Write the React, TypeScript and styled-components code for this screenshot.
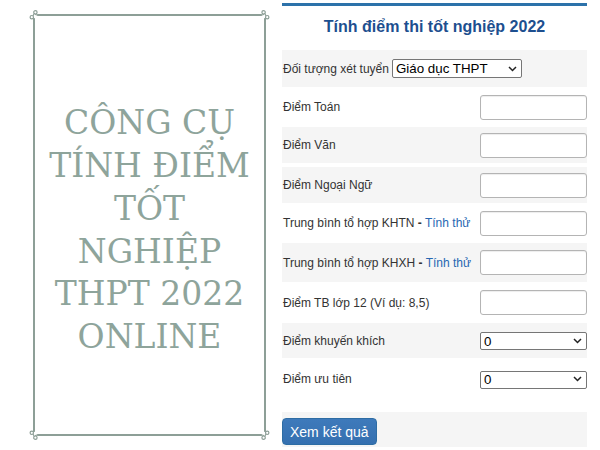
import styled, { createGlobalStyle, css } from "styled-components";

const Global = createGlobalStyle`
  body { margin: 0; background: #fff; }
  * { box-sizing: border-box; }
`;

const ink = "#8d9f97";
const sans = `"Liberation Sans", Arial, sans-serif`;

const Page = styled.div`
  display: flex;
  width: 600px;
  height: 450px;
  background: #fff;
  font-family: ${sans};
`;

const Poster = styled.div`
  flex: none;
  width: 282px;
  padding: 14px 0 0 33px;
`;

const Frame = styled.div`
  position: relative;
  width: 233px;
  height: 422px;
  border: 2px solid ${ink};
  display: flex;
  align-items: center;
  justify-content: center;
  padding-top: 11px;
`;

type Corner = "tl" | "tr" | "bl" | "br";

const Ornament = styled.svg<{ $at: Corner }>`
  position: absolute;
  width: 12px;
  height: 12px;
  ${({ $at }) => ($at[0] === "t" ? "top: -7px;" : "bottom: -7px;")}
  ${({ $at }) => ($at[1] === "l" ? "left: -7px;" : "right: -7px;")}
  transform: scale(${({ $at }) => ($at[1] === "r" ? -1 : 1)}, ${({ $at }) => ($at[0] === "b" ? -1 : 1)});
`;

const Headline = styled.div`
  font-family: "DejaVu Serif", "Liberation Serif", serif;
  font-size: 33px;
  line-height: 42.8px;
  color: #8ea49b;
  text-align: center;
`;

const Form = styled.div`
  width: 305px;
  padding-top: 3px;
`;

const Panel = styled.div`
  border-top: 3px solid #2c72aa;
`;

const Heading = styled.div`
  height: 44px;
  padding-bottom: 2px;
  display: flex;
  align-items: center;
  justify-content: center;
  font-size: 16px;
  font-weight: 700;
  color: #1d4f8f;
`;

const Row = styled.div<{ $h: number; $shade?: boolean; $gap?: number; $inline?: boolean }>`
  display: flex;
  align-items: center;
  height: ${({ $h }) => $h}px;
  margin-top: ${({ $gap }) => $gap ?? 0}px;
  padding-left: 1px;
  background: ${({ $shade }) => ($shade ? "#f5f5f5" : "#fff")};
  ${({ $inline }) =>
    $inline
      ? css`gap: 3px;`
      : css`justify-content: space-between;`}
`;

const ButtonRow = styled(Row)`
  align-items: flex-start;
  padding: 6px 0 0;
`;

const Label = styled.span`
  font-size: 12px;
  color: #333;
  b { color: #333; }
`;

const Link = styled.a`
  color: #2767b2;
  text-decoration: none;
`;

const Field = styled.input`
  width: 107px;
  height: 25px;
  border: 1px solid #b4b4b4;
  border-radius: 3px;
  box-shadow: inset 0 1px 1px rgba(0, 0, 0, 0.075);
  padding: 2px 6px;
  font: 13px ${sans};
  background: #fff;
`;

const Picker = styled.div<{ $w: number; $h: number }>`
  position: relative;
  width: ${({ $w }) => $w}px;
  height: ${({ $h }) => $h}px;
`;

const Select = styled.select`
  appearance: none;
  width: 100%;
  height: 100%;
  border: 1px solid #767676;
  border-radius: 2px;
  background: #fff;
  color: #000;
  padding: 0 3px;
  font: 13.33px ${sans};
`;

const Chevron = styled.svg`
  position: absolute;
  right: 5px;
  top: 50%;
  width: 9px;
  height: 6px;
  margin-top: -3px;
  pointer-events: none;
`;

const Submit = styled.button`
  height: 27px;
  padding: 0 7px;
  border: 1px solid #2e6da4;
  border-radius: 4px;
  background: linear-gradient(#3e7abb, #3570b0);
  color: #fff;
  font: 14px ${sans};
`;

function CornerCurl({ at }: { at: Corner }) {
  return (
    <Ornament $at={at} viewBox="0 0 12 12" aria-hidden="true">
      <rect x="0" y="0" width="9.2" height="9.2" fill="#fff" />
      <g fill="none" stroke={ink} strokeWidth="1.2">
        <path d="M12 6 L9.2 6 Q7.8 6 7.2 5" />
        <circle cx="7.4" cy="3.3" r="1.7" />
        <path d="M6.2 4.6 Q5.6 6 4.9 6.8" />
        <circle cx="3.8" cy="8.2" r="1.7" />
        <path d="M5.2 9.3 Q6 9.8 6 10.5 L6 12" />
      </g>
    </Ornament>
  );
}

function Dropdown({ w, h, value }: { w: number; h: number; value: string }) {
  return (
    <Picker $w={w} $h={h}>
      <Select defaultValue={value}>
        <option>{value}</option>
      </Select>
      <Chevron viewBox="0 0 9 6" aria-hidden="true">
        <polyline points="1,1 4.5,4.5 8,1" fill="none" stroke="#222" strokeWidth="1.5" />
      </Chevron>
    </Picker>
  );
}

const scoreRows: { label: React.ReactNode; h: number; shade?: boolean; gap?: number }[] = [
  { label: "Điểm Toán", h: 40 },
  { label: "Điểm Văn", h: 36, shade: true },
  { label: "Điểm Ngoại Ngữ", h: 36, shade: true, gap: 4 },
  {
    label: (
      <>
        Trung bình tổ hợp KHTN <b>-</b> <Link>Tính thử</Link>
      </>
    ),
    h: 40,
  },
  {
    label: (
      <>
        Trung bình tổ hợp KHXH <b>-</b> <Link>Tính thử</Link>
      </>
    ),
    h: 39,
    shade: true,
  },
  { label: "Điểm TB lớp 12 (Ví dụ: 8,5)", h: 41 },
];

export default function App() {
  return (
    <Page>
      <Global />
      <Poster>
        <Frame>
          <CornerCurl at="tl" />
          <CornerCurl at="tr" />
          <CornerCurl at="bl" />
          <CornerCurl at="br" />
          <Headline>
            CÔNG CỤ
            <br />
            TÍNH ĐIỂM
            <br />
            TỐT
            <br />
            NGHIỆP
            <br />
            THPT 2022
            <br />
            ONLINE
          </Headline>
        </Frame>
      </Poster>
      <Form>
        <Panel>
          <Heading>Tính điểm thi tốt nghiệp 2022</Heading>
          <Row $h={37} $shade $inline>
            <Label>Đối tượng xét tuyển</Label>
            <Dropdown w={130} h={19} value="Giáo dục THPT" />
          </Row>
          {scoreRows.map((r, i) => (
            <Row key={i} $h={r.h} $shade={r.shade} $gap={r.gap}>
              <Label>{r.label}</Label>
              <Field type="text" />
            </Row>
          ))}
          <Row $h={35} $shade>
            <Label>Điểm khuyến khích</Label>
            <Dropdown w={107} h={18} value="0" />
          </Row>
          <Row $h={42}>
            <Label>Điểm ưu tiên</Label>
            <Dropdown w={107} h={18} value="0" />
          </Row>
          <ButtonRow $h={35} $shade $gap={12}>
            <Submit>Xem kết quả</Submit>
          </ButtonRow>
        </Panel>
      </Form>
    </Page>
  );
}
